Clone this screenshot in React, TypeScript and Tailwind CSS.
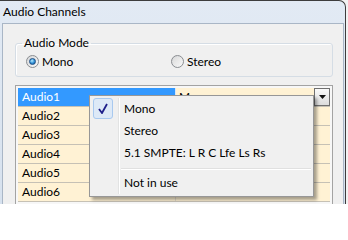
import React from "react";

const channels = ["Audio1", "Audio2", "Audio3", "Audio4", "Audio5", "Audio6"];

const menuItems = [
  { label: "Mono", checked: true },
  { label: "Stereo" },
  { label: "5.1 SMPTE: L R C Lfe Ls Rs" },
  { separator: true },
  { label: "Not in use" },
];

function Radio({ checked }: { checked?: boolean }) {
  return (
    <span className="flex items-center justify-center w-[13px] h-[13px] rounded-full border border-[#8a8d91] bg-gradient-to-br from-[#d4d6d8] to-[#fbfbfb]">
      {checked ? (
        <span className="w-[7px] h-[7px] rounded-full border border-[#1d4f86] bg-[radial-gradient(circle_at_40%_35%,#b6ecff,#2f8fd6_55%,#12548f)]" />
      ) : (
        <span className="w-[9px] h-[9px] rounded-full bg-gradient-to-br from-[#dcdcdc] to-[#f6f6f6]" />
      )}
    </span>
  );
}

const App: React.FC = () => {
  return (
    <div className="relative w-[348px] h-[204px] overflow-hidden bg-[#f2f2f2] font-['Lato','Liberation_Sans',sans-serif] text-[12px] text-black">
      {/* Window */}
      <div className="flex flex-col w-[346px] h-[214px] border-t border-r border-[#3d3d3d] rounded-tr-[7px] bg-gradient-to-b from-[#e2eaf4] to-[#d6e1ee] pl-[2px] pr-[1px]">
        <div className="h-[22px] flex items-center pl-[1px] text-[12px] leading-none">
          Audio Channels
        </div>

        <div className="flex-1 bg-[#f0f0f0] border border-b-0 border-[#a9b6c6] pl-[12px] pr-[10px]">
          {/* Audio Mode group */}
          <fieldset className="mt-[12px] h-[41px] border border-[#d5dde5] rounded-[3px] shadow-[inset_1px_1px_0_#ffffff]">
            <legend className="ml-[6px] px-[2px] leading-[14px]">Audio Mode</legend>
            <div className="flex items-center pl-[10px] pt-[5px]">
              <label className="flex items-center gap-[3px] w-[145px]">
                <Radio checked />
                <span className="leading-[13px]">Mono</span>
              </label>
              <label className="flex items-center gap-[3px]">
                <Radio />
                <span className="leading-[13px]">Stereo</span>
              </label>
            </div>
          </fieldset>

          {/* Channel table */}
          <div className="mt-[8px] border border-[#a3a3a3] bg-[#f7f7f7] p-[2px]">
            {channels.map((name, i) => (
              <div key={name} className="flex h-[19px] border-b border-[#c6c1b5]">
                <div
                  className={
                    i === 0
                      ? "w-[158px] pl-[4px] flex items-center bg-[#3399ff] text-white border-r border-[#d8e6f5]"
                      : "w-[158px] pl-[4px] flex items-center bg-[#fff2d4] border-r border-[#e4dccb]"
                  }
                >
                  {name}
                </div>
                <div className="flex-1 flex items-center bg-[#fff2d4] pl-[3px]">
                  {i === 0 && (
                    <>
                      <span>Mono</span>
                      <span className="ml-auto flex items-center justify-center w-[16px] h-[18px] border border-[#6f6f6f] bg-gradient-to-b from-[#fafafa] to-[#dcdcdc]">
                        <svg width="7" height="4" viewBox="0 0 7 4">
                          <path d="M0 0h7L3.5 4z" fill="#111" />
                        </svg>
                      </span>
                    </>
                  )}
                </div>
              </div>
            ))}
          </div>
        </div>
      </div>

      {/* Dropdown menu */}
      <div className="absolute left-[89px] top-[95px] w-[225px] border border-[#979797] bg-[#f0f0f0] py-[2px] pl-[2px] pr-[2px] shadow-[3px_3px_3px_rgba(0,0,0,0.35)]">
        {menuItems.map((item, i) =>
          item.separator ? (
            <div key={i} className="flex h-[8px]">
              <div className="w-[27px] border-r border-[#e2e3e3]" />
              <div className="flex-1 border-l border-white pl-[1px] pt-[4px]">
                <div className="border-t border-[#e0e0e0] border-b border-b-white" />
              </div>
            </div>
          ) : (
            <div key={i} className="flex h-[22px]">
              <div className="w-[27px] border-r border-[#e2e3e3] pl-[1px]">
                {item.checked && (
                  <div className="w-[20px] h-[21px] flex items-center justify-center rounded-[3px] border border-[#a8c9ef] bg-[#dde9f7]">
                    <svg width="10" height="11" viewBox="0 0 10 11">
                      <path d="M1 6 L4 10 L9 1" fill="none" stroke="#1f1f8a" strokeWidth="1.8" />
                    </svg>
                  </div>
                )}
              </div>
              <div className="flex-1 flex items-center border-l border-white pl-[4px]">
                {item.label}
              </div>
            </div>
          )
        )}
      </div>
    </div>
  );
};

export default App;
